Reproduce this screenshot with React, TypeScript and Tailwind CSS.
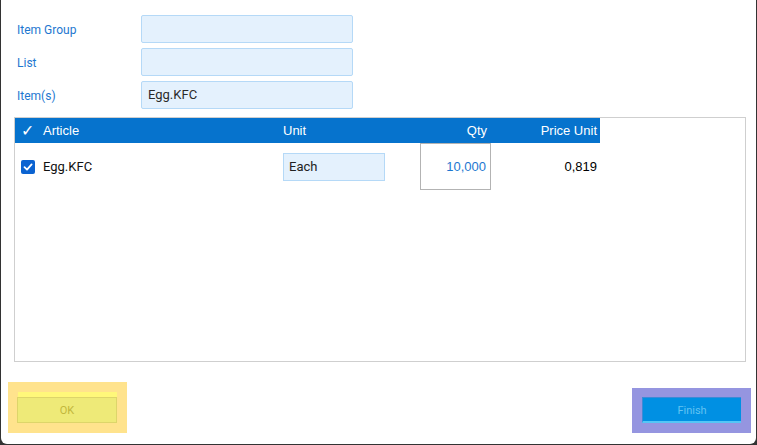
import React from 'react';

const labelFont = { fontFamily: 'Roboto, "Liberation Sans", sans-serif' };
const tableFont = { fontFamily: '"Liberation Sans", Arial, sans-serif' };

function FormRow({ label, value }: { label: string; value?: string }) {
    return (
        <div className="flex items-center h-[28px]">
            <div className="w-[140px] pl-[16px] pt-[2px] text-[12px] text-[#1e77d0]" style={labelFont}>
                {label}
            </div>
            <div
                className="w-[212px] h-[28px] bg-[#e4f1fd] border border-[#b5d9f7] rounded-[2px] flex items-center pl-[6px] text-[13px] text-[#2a2a2a]"
                style={labelFont}
            >
                {value}
            </div>
        </div>
    );
}

export default function App() {
    return (
        <div className="w-[757px] h-[445px] bg-[#333333] flex">
            <div className="ml-px mr-px mb-px flex-1 bg-white rounded-b-[6px] flex flex-col">
                {/* Filter fields */}
                <div className="pt-[15px] flex flex-col gap-[5px]">
                    <FormRow label="Item Group" />
                    <FormRow label="List" />
                    <FormRow label="Item(s)" value="Egg.KFC" />
                </div>

                {/* Articles table */}
                <div className="ml-[13px] mr-[10px] mt-[8px] h-[245px] border border-[#cfcfcf]" style={tableFont}>
                    <div className="flex w-[585px] h-[25px] bg-[#0673cd] text-white text-[13px] items-center">
                        <div className="w-[268px] flex items-center">
                            <span className="w-[28px] pl-[6px] text-[16px] leading-none">✓</span>
                            <span>Article</span>
                        </div>
                        <div className="w-[137px]">Unit</div>
                        <div className="w-[71px] text-right pr-[4px]">Qty</div>
                        <div className="w-[109px] text-right pr-[3px]">Price Unit</div>
                    </div>
                    <div className="flex w-[585px] h-[47px] items-center text-[13px]">
                        <div className="w-[268px] flex items-center">
                            <span className="ml-[6px] mr-[8px] w-[14px] h-[14px] rounded-[2px] bg-[#0b63d1] flex items-center justify-center">
                                <svg width="10" height="10" viewBox="0 0 10 10" fill="none">
                                    <path d="M1.5 5.2 L4 7.6 L8.6 2.4" stroke="white" strokeWidth="1.8" strokeLinecap="round" strokeLinejoin="round" />
                                </svg>
                            </span>
                            <span className="text-[#111]" style={labelFont}>Egg.KFC</span>
                        </div>
                        <div className="w-[137px]">
                            <div
                                className="w-[102px] h-[28px] bg-[#e4f1fd] border border-[#b5d9f7] flex items-center pl-[5px] text-[#222]"
                                style={labelFont}
                            >
                                Each
                            </div>
                        </div>
                        <div className="w-[71px] h-[47px] border border-[#b3b3b3] flex items-center justify-end pr-[4px] text-[#1e77d0]">
                            10,000
                        </div>
                        <div className="w-[109px] text-right pr-[3px] text-black">0,819</div>
                    </div>
                </div>

                {/* Footer buttons */}
                <div className="mt-[20px] flex justify-between items-end" style={labelFont}>
                    <div className="ml-[7px] w-[119px] h-[51px] bg-[#ffe38d] pt-[10px] pl-[9px]">
                        <div className="ml-px w-[99px] h-[5px] bg-[#fff87a]" />
                        <div className="w-[100px] h-[26px] bg-[#eeea78] border border-[#ddd56a] flex items-center justify-center pt-[2px] text-[11px] text-[#c2b73c]">
                            OK
                        </div>
                    </div>
                    <div className="mr-[5px] w-[119px] h-[45px] bg-[#9595e0] pt-[9px] pl-[10px]">
                        <div className="w-[99px] h-[26px] bg-[#0090e3] border-t border-l border-[#3d8ad6] border-b-2 border-b-[#55c6f6] flex items-center justify-center pt-[4px] text-[11px] text-[#62c3f2]">
                            Finish
                        </div>
                    </div>
                </div>
            </div>
        </div>
    );
}
